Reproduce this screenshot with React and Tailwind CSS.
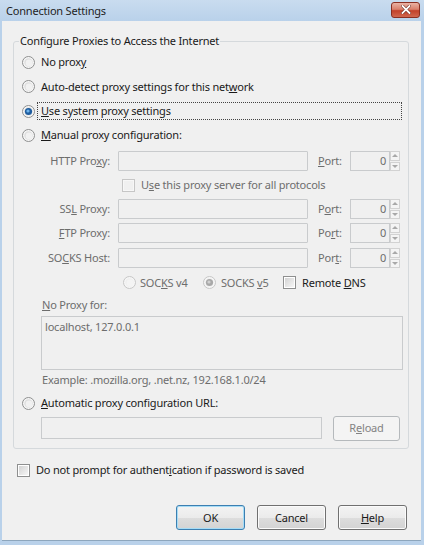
import React from "react";

const F = "font-['Noto_Sans',sans-serif] text-[11px] leading-[16px] tracking-[-0.2px]";

function Radio({ checked = false, disabled = false }) {
  const ring = disabled ? "#c6c6c6" : "#8e8f8f";
  return (
    <svg width="13" height="13" viewBox="0 0 13 13" className="shrink-0">
      <circle cx="6.5" cy="6.5" r="6" fill="#f6f6f6" stroke={ring} />
      <circle cx="6.5" cy="6.5" r="4.2" fill={disabled ? "#efefef" : "#dedede"} />
      <circle cx="7" cy="7" r="3.4" fill={disabled ? "#f4f4f4" : "#f1f1f1"} />
      {checked && (
        <>
          <circle cx="6.5" cy="6.5" r="3.6" fill={disabled ? "#a8a8a8" : "#1f5d9f"} />
          <circle cx="6" cy="6" r="1.6" fill={disabled ? "#d0d0d0" : "#6db3ec"} />
        </>
      )}
    </svg>
  );
}

function Check({ disabled = false }) {
  return (
    <div
      className={`w-[13px] h-[13px] shrink-0 border p-[1px] ${
        disabled ? "border-[#c6c6c6] bg-[#f7f7f7]" : "border-[#8e8f8f] bg-white"
      }`}
    >
      <div
        className={`w-full h-full ${
          disabled ? "bg-[#f0f0f0]" : "bg-linear-to-br from-[#d3d3d3] to-[#f6f6f6]"
        }`}
      />
    </div>
  );
}

function Field({ w }) {
  return <div className={`${w} h-[20px] border border-[#c9cbcd] bg-[#f0f0f0] rounded-[1px]`} />;
}

function Spinner() {
  return (
    <div className="w-[10px] h-[20px] flex flex-col gap-[1px]">
      <div className="flex-1 border border-[#d2d2d2] bg-[#f4f4f4] flex items-center justify-center">
        <div className="w-0 h-0 border-x-[3px] border-x-transparent border-b-[3px] border-b-[#a8a8a8]" />
      </div>
      <div className="flex-1 border border-[#d2d2d2] bg-[#f4f4f4] flex items-center justify-center">
        <div className="w-0 h-0 border-x-[3px] border-x-transparent border-t-[3px] border-t-[#a8a8a8]" />
      </div>
    </div>
  );
}

function ProxyRow({ label, port, mt }) {
  return (
    <div className={`flex items-center h-[20px] ${mt} text-[#6d6d6d]`}>
      <div className="w-[96px] text-right">{label}</div>
      <div className="ml-[8px]">
        <Field w="w-[190px]" />
      </div>
      <div className="ml-[10px] w-[32px]">{port}</div>
      <div className="w-[40px] h-[20px] border border-[#c9cbcd] bg-[#f0f0f0] flex items-center justify-end pr-[3px]">
        0
      </div>
      <Spinner />
    </div>
  );
}

function Option({ children, checked, focus, h }) {
  return (
    <div className={`flex items-center ${h} pl-[8px]`}>
      <Radio checked={checked} />
      <div
        className={`ml-[2px] mr-[6px] flex-1 border pl-[3px] pr-1 ${
          focus ? "border-dotted border-[#444]" : "border-transparent"
        }`}
      >
        {children}
      </div>
    </div>
  );
}

function Button({ children, primary, disabled, w = "w-[69px]" }) {
  let look =
    "border-[#707070] bg-[linear-gradient(to_bottom,#f3f3f3_0%,#ebebeb_50%,#dddddd_51%,#d3d3d3_100%)] text-[#1a1a1a] shadow-[inset_0_0_0_1px_#fbfbfb]";
  if (primary)
    look =
      "border-[#3c7fb1] bg-[linear-gradient(to_bottom,#f3f3f3_0%,#ebebeb_50%,#dddddd_51%,#d3d3d3_100%)] text-[#1a1a1a] shadow-[inset_0_0_0_1px_#a6dcf6]";
  if (disabled) look = "border-[#b5b9bc] bg-[#f4f4f4] text-[#838383]";
  return (
    <div className={`${w} h-[25px] border rounded-[3px] flex items-center justify-center ${look}`}>
      {children}
    </div>
  );
}

export default function App() {
  return (
    <div className={`w-[424px] h-[545px] flex flex-col bg-[#b9d1ea] ${F} text-[#1a1a1a]`}>
      {/* title bar */}
      <div className="h-[21px] flex items-center justify-between pl-[6px] pr-[4px] bg-linear-to-b from-[#c9dcef] to-[#b9d1ea]">
        <span className="text-[#1e1e1e]">Connection Settings</span>
        <div className="w-[29px] h-[16px] mb-[2px] rounded-[3px] border border-[#8a2f22] bg-[linear-gradient(to_bottom,#eab2a4_0%,#d9806c_45%,#c2412a_55%,#d0674f_100%)] flex items-center justify-center">
          <svg width="10" height="9" viewBox="0 0 10 9">
            <path d="M1.5 1 L8.5 8 M8.5 1 L1.5 8" stroke="#6b2a20" strokeWidth="3" strokeLinecap="square" />
            <path d="M1.5 1 L8.5 8 M8.5 1 L1.5 8" stroke="#ffffff" strokeWidth="1.8" strokeLinecap="square" />
          </svg>
        </div>
      </div>

      {/* client */}
      <div className="flex-1 ml-[2px] mr-[3px] mb-[4px] bg-[#f0f0f0] border-b border-[#8da6bd] flex flex-col pt-[12px]">
        <fieldset className="ml-[11px] mr-[12px] border border-[#d5d9dc] rounded-[3px] pb-[8px]">
          <legend className="ml-[5px] px-[1px] text-[#1a1a1a]">Configure Proxies to Access the Internet</legend>
          <div className="pt-[1px] flex flex-col">
            <Option h="h-[24px]">
              No prox<u>y</u>
            </Option>
            <Option h="h-[25px]">
              Auto-detect proxy settings for this net<u>w</u>ork
            </Option>
            <Option h="h-[24px]" checked focus>
              <u>U</u>se system proxy settings
            </Option>
            <Option h="h-[24px]">
              <u>M</u>anual proxy configuration:
            </Option>

            <ProxyRow
              mt="mt-[4px]"
              label={<>HTTP Pro<u>x</u>y:</>}
              port={<><u>P</u>ort:</>}
            />
            <div className="h-[28px] flex items-center pl-[108px] text-[#6d6d6d]">
              <Check disabled />
              <span className="ml-[6px]">
                U<u>s</u>e this proxy server for all protocols
              </span>
            </div>
            <ProxyRow
              mt=""
              label={<>SS<u>L</u> Proxy:</>}
              port={<>P<u>o</u>rt:</>}
            />
            <ProxyRow
              mt="mt-[4px]"
              label={<><u>F</u>TP Proxy:</>}
              port={<>Po<u>r</u>t:</>}
            />
            <ProxyRow
              mt="mt-[5px]"
              label={<>SO<u>C</u>KS Host:</>}
              port={<>Por<u>t</u>:</>}
            />

            <div className="h-[29px] flex items-center pl-[109px]">
              <div className="w-[80px] flex items-center text-[#6d6d6d]">
                <Radio disabled />
                <span className="ml-[4px]">
                  SOC<u>K</u>S v4
                </span>
              </div>
              <div className="w-[80px] flex items-center text-[#6d6d6d]">
                <Radio disabled checked />
                <span className="ml-[5px]">
                  SOCKS <u>v</u>5
                </span>
              </div>
              <div className="flex items-center">
                <Check />
                <span className="ml-[6px]">
                  Remote <u>D</u>NS
                </span>
              </div>
            </div>

            <div className="h-[16px] pl-[28px] text-[#6d6d6d]">
              <u>N</u>o Proxy for:
            </div>
            <div className="mt-[3px] ml-[27px] w-[362px] h-[54px] border border-[#c9cbcd] bg-[#f0f0f0] pl-[3px] pt-[2px] text-[#6d6d6d]">
              localhost, 127.0.0.1
            </div>
            <div className="mt-[1px] h-[18px] flex items-center pl-[28px] text-[#6d6d6d]">
              Example: .mozilla.org, .net.nz, 192.168.1.0/24
            </div>
            <div className="mt-[2px]">
              <Option h="h-[24px]">
                <u>A</u>utomatic proxy configuration URL:
              </Option>
            </div>
            <div className="mt-[1px] h-[24px] flex items-center pl-[27px]">
              <div className="w-[281px] h-[22px] border border-[#c9cbcd] bg-[#f0f0f0]" />
              <div className="ml-[11px]">
                <Button disabled w="w-[67px]">
                  R<u>e</u>load
                </Button>
              </div>
            </div>
          </div>
        </fieldset>

        <div className="mt-[11px] h-[20px] flex items-center pl-[15px]">
          <Check />
          <span className="ml-[6px]">
            Do not prompt for authent<u>i</u>cation if password is saved
          </span>
        </div>

        <div className="mt-[25px] flex justify-end gap-[12px] pr-[14px]">
          <Button primary>OK</Button>
          <Button>Cancel</Button>
          <Button>
            <u>H</u>elp
          </Button>
        </div>
      </div>
    </div>
  );
}
